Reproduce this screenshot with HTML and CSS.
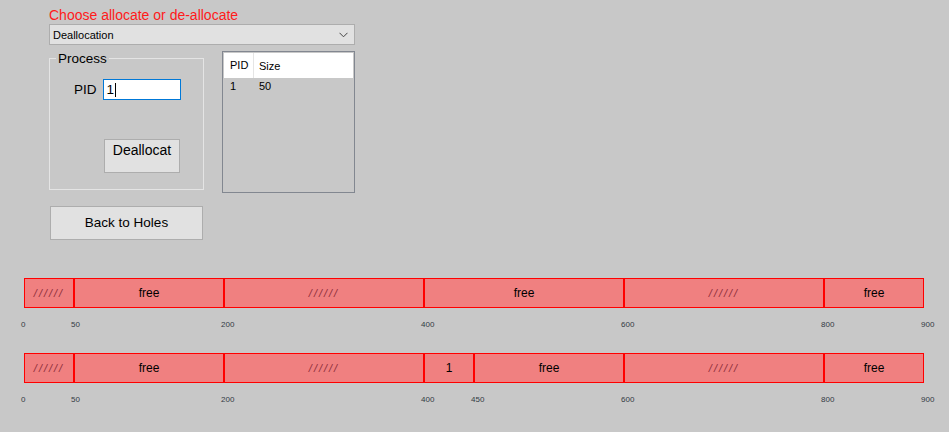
FILE: index.html
```html
<!DOCTYPE html>
<html>
<head>
<meta charset="utf-8">
<link rel="stylesheet" href="styles.css">
</head>
<body>
<div class="form">
  <div class="title">Choose allocate or de-allocate</div>
  <div class="select">
    <span>Deallocation</span>
    <svg class="chev" width="9" height="6" viewBox="0 0 9 6"><path d="M0.5 0.8 L4.5 4.8 L8.5 0.8" fill="none" stroke="#444" stroke-width="1"/></svg>
  </div>
  <div class="row">
    <fieldset class="group">
      <legend>Process</legend>
      <div class="field">
        <label>PID</label>
        <div class="input">1<span class="caret"></span></div>
      </div>
      <div class="btn dealloc">Deallocat</div>
    </fieldset>
    <div class="list">
      <div class="lhead">
        <div class="c1">PID</div>
        <div class="c2">Size</div>
      </div>
      <div class="lrow">
        <div class="c1">1</div>
        <div class="c2">50</div>
      </div>
    </div>
  </div>
  <div class="btn back">Back to Holes</div>
</div>

<div class="memory first">
  <div class="bar">
    <div class="seg hatch" style="width:50px">//////</div>
    <div class="seg" style="width:150px">free</div>
    <div class="seg hatch" style="width:200px">//////</div>
    <div class="seg" style="width:200px">free</div>
    <div class="seg hatch" style="width:200px">//////</div>
    <div class="seg" style="width:100px">free</div>
  </div>
  <div class="scale">
    <span style="left:0px">0</span>
    <span style="left:50px">50</span>
    <span style="left:200px">200</span>
    <span style="left:400px">400</span>
    <span style="left:600px">600</span>
    <span style="left:800px">800</span>
    <span style="left:900px">900</span>
  </div>
</div>

<div class="memory second">
  <div class="bar">
    <div class="seg hatch" style="width:50px">//////</div>
    <div class="seg" style="width:150px">free</div>
    <div class="seg hatch" style="width:200px">//////</div>
    <div class="seg" style="width:50px">1</div>
    <div class="seg" style="width:150px">free</div>
    <div class="seg hatch" style="width:200px">//////</div>
    <div class="seg" style="width:100px">free</div>
  </div>
  <div class="scale">
    <span style="left:0px">0</span>
    <span style="left:50px">50</span>
    <span style="left:200px">200</span>
    <span style="left:400px">400</span>
    <span style="left:450px">450</span>
    <span style="left:600px">600</span>
    <span style="left:800px">800</span>
    <span style="left:900px">900</span>
  </div>
</div>
</body>
</html>
```
FILE: styles.css
```css
html, body {
  margin: 0;
  padding: 0;
  background: #c8c8c8;
  font-family: "Liberation Sans", Arial, sans-serif;
  color: #000;
}
body {
  width: 949px;
  height: 432px;
  overflow: hidden;
}
.form {
  padding-left: 49px;
  padding-top: 7px;
}
.title {
  color: #ff1a1a;
  font-size: 14px;
  line-height: 17px;
  height: 17px;
}
.select {
  border: 1px solid #adadad;
  background: #e1e1e1;
  display: flex;
  align-items: center;
  justify-content: space-between;
  padding: 0 6px 0 3px;
  box-sizing: border-box;
  width: 306px;
  height: 21px;
  font-size: 11px;
}
.chev {
  display: block;
}
.row {
  display: flex;
  align-items: flex-start;
  margin-top: 6px;
}
.group {
  margin: 0;
  padding: 0;
  width: 155px;
  height: 139px;
  box-sizing: border-box;
  border: 1px solid #e4e4e4;
}
.group legend {
  font-size: 13.5px;
  padding: 0 2px;
  margin-left: 6px;
  line-height: 15px;
}
.field {
  display: flex;
  align-items: center;
  margin-top: 13px;
  margin-left: 24px;
}
.field label {
  font-size: 13.5px;
  margin-right: 6px;
}
.input {
  width: 78px;
  height: 21px;
  box-sizing: border-box;
  border: 1px solid #0078d7;
  background: #fff;
  font-size: 13.5px;
  line-height: 19px;
  padding-left: 3px;
  display: flex;
  align-items: center;
}
.caret {
  display: inline-block;
  width: 1px;
  height: 14px;
  background: #000;
  margin-left: 1px;
}
.btn {
  background: #e1e1e1;
  border: 1px solid #adadad;
  box-sizing: border-box;
  font-size: 13.5px;
  text-align: center;
}
.dealloc {
  width: 76px;
  height: 34px;
  margin-left: 54px;
  margin-top: 39px;
  padding-top: 3px;
  line-height: 15px;
  font-size: 14px;
  white-space: nowrap;
  overflow: hidden;
}
.list {
  margin-left: 18px;
  width: 133px;
  height: 142px;
  box-sizing: border-box;
  border: 1px solid #828790;
  padding: 1px;
  font-size: 11px;
}
.lhead {
  display: flex;
  background: #fff;
  height: 25px;
  align-items: center;
}
.lhead .c1 {
  border-right: 1px solid #e5e5e5;
  height: 25px;
  line-height: 25px;
}
.c1 {
  width: 30px;
  padding-left: 6px;
  box-sizing: border-box;
}
.c2 {
  padding-left: 5px;
}
.lrow {
  display: flex;
  height: 17px;
  line-height: 17px;
}
.back {
  width: 153px;
  height: 34px;
  margin-top: 13px;
  margin-left: 1px;
  line-height: 32px;
  font-size: 13.5px;
}
.memory {
  margin-left: 24px;
}
.first {
  margin-top: 38px;
}
.second {
  margin-top: 19px;
}
.bar {
  display: flex;
  height: 30px;
}
.seg {
  box-sizing: border-box;
  border: 1px solid #ff0000;
  background: #f08080;
  display: flex;
  align-items: center;
  justify-content: center;
  font-size: 12px;
}
.hatch {
  font-style: italic;
  color: #8b2d3a;
  font-size: 11px;
  letter-spacing: 2px;
}
.scale {
  position: relative;
  height: 26px;
  width: 900px;
}
.scale span {
  position: absolute;
  top: 12px;
  margin-left: -3px;
  font-size: 8px;
  line-height: 9px;
  color: #333a44;
}
```
